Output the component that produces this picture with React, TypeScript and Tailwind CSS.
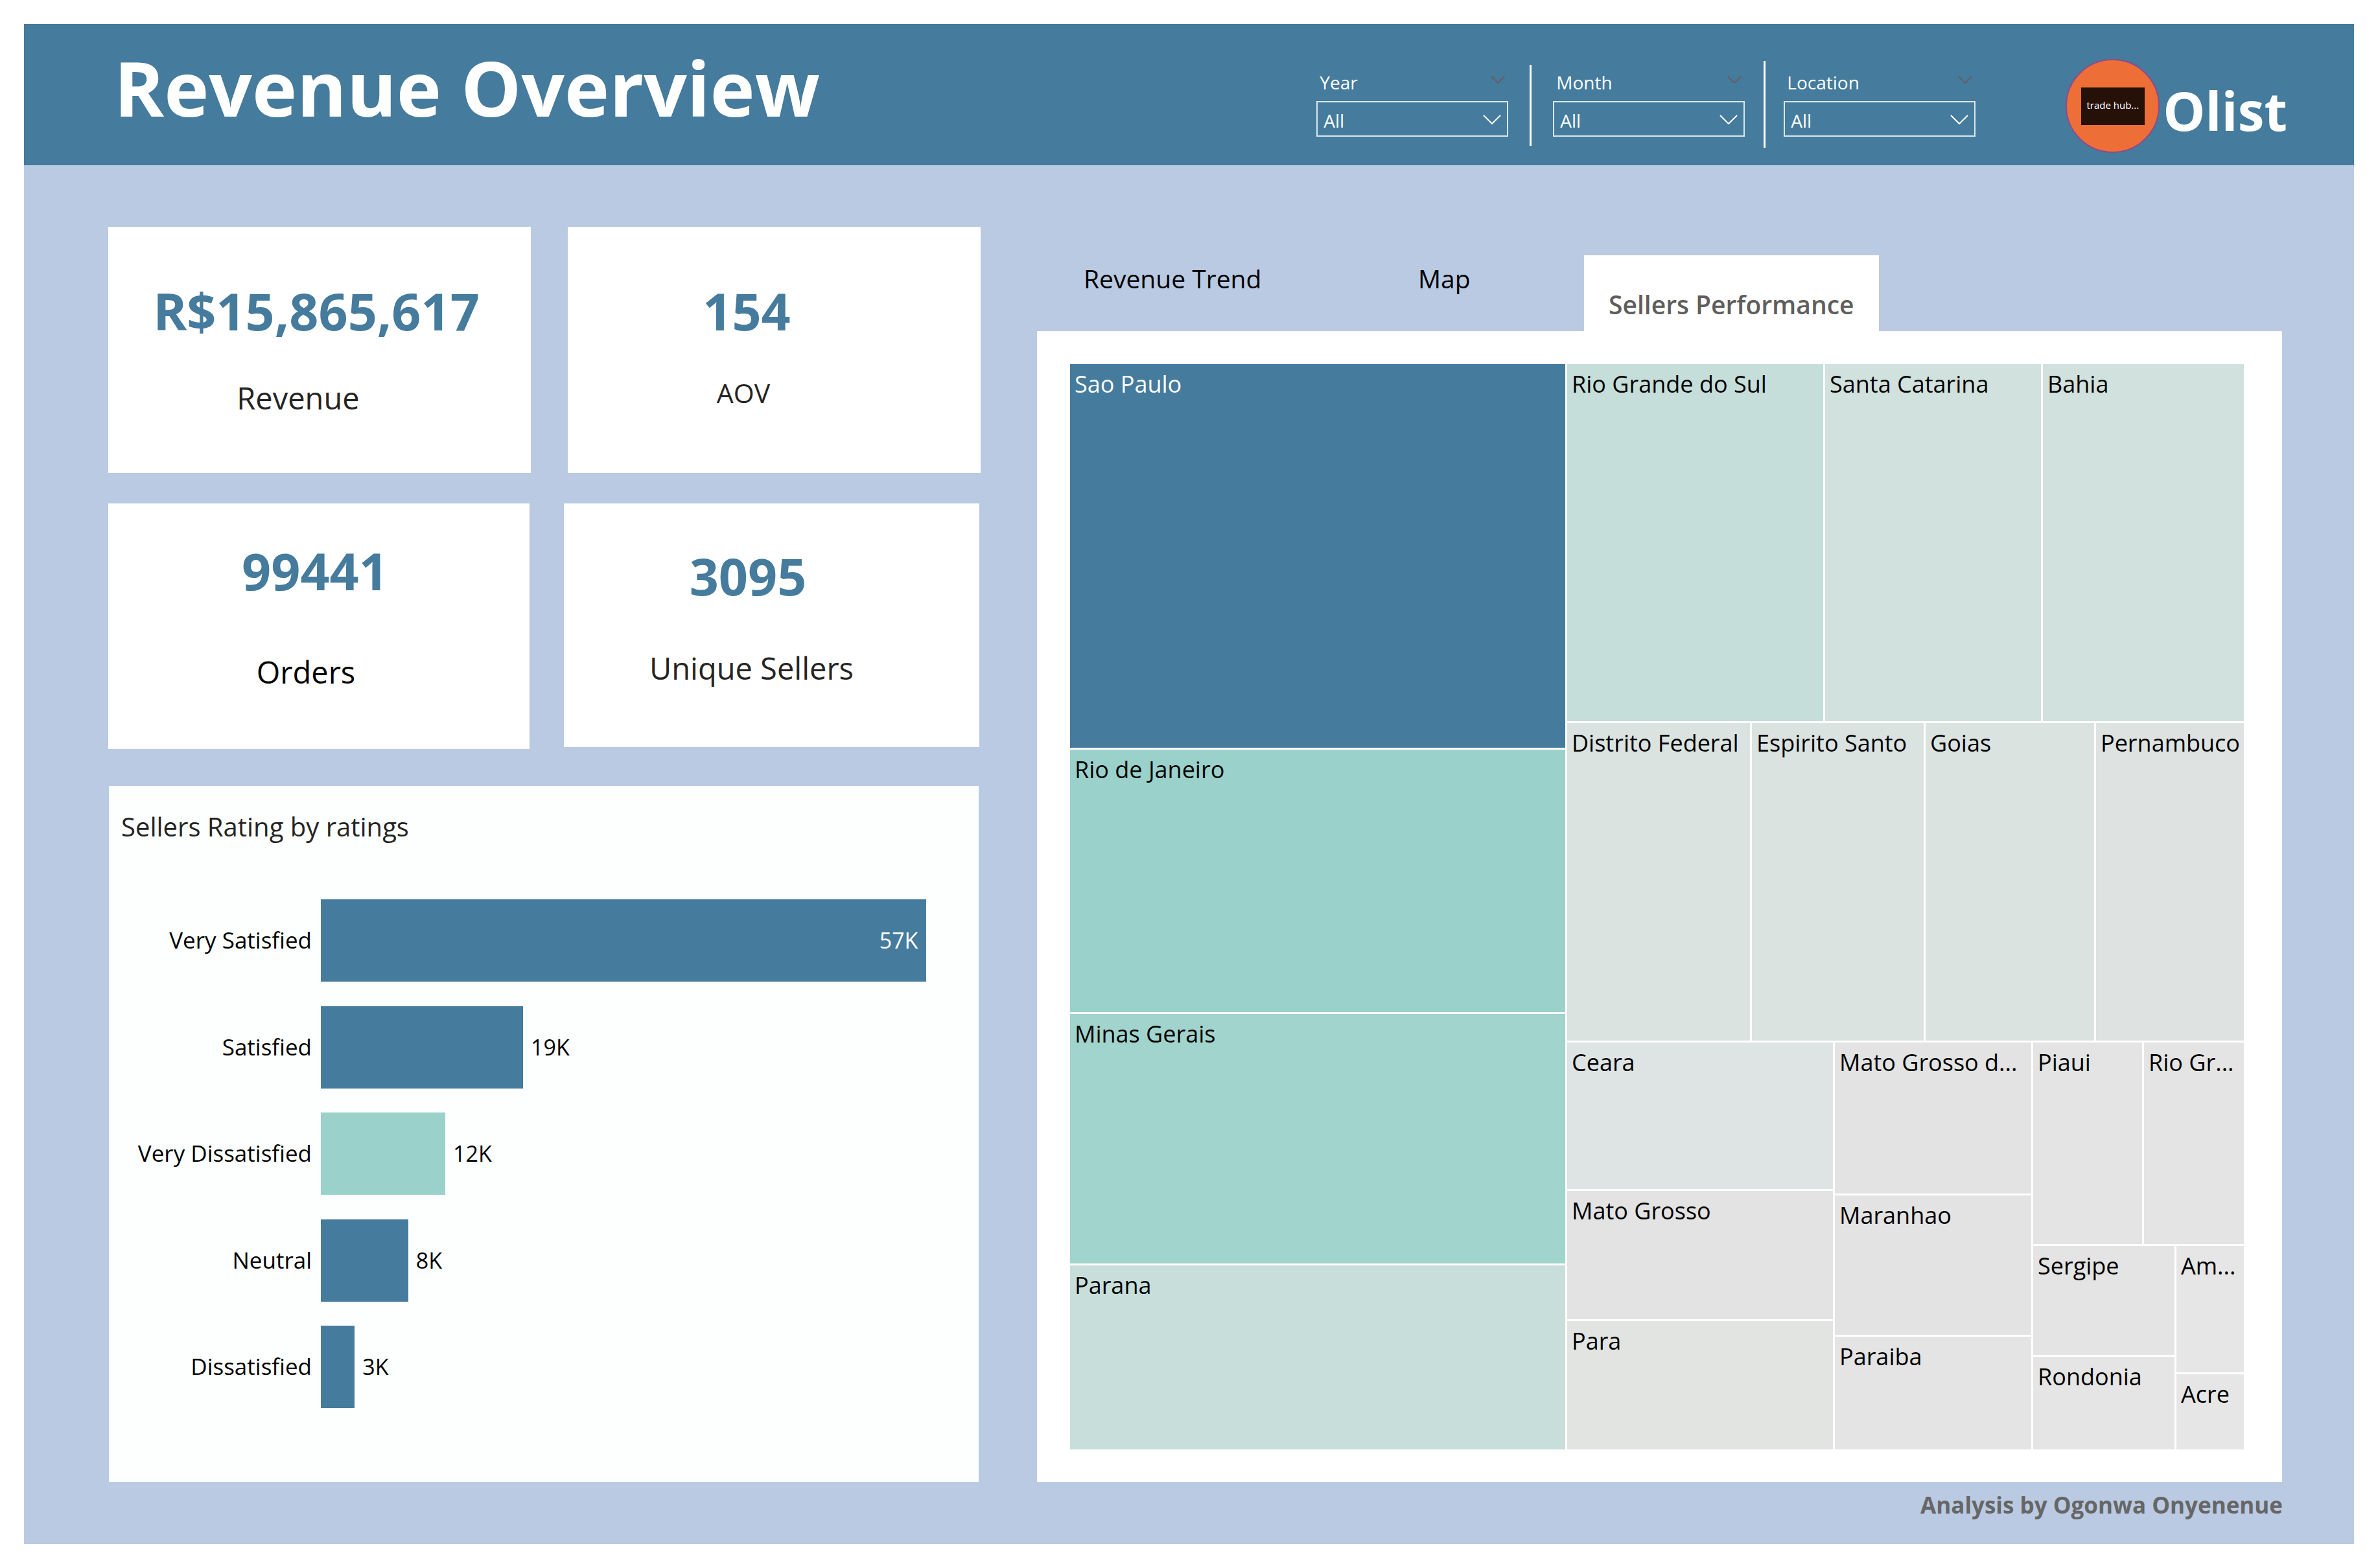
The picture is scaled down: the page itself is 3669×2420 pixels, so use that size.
import React from "react";

type Tile = { name: string; size: number; color: string; text?: string };
type Group = { dir: "row" | "col"; size: number; items: Node[] };
type Node = Tile | Group;

const row = (size: number, ...items: Node[]): Group => ({ dir: "row", size, items });
const col = (size: number, ...items: Node[]): Group => ({ dir: "col", size, items });
const tile = (name: string, size: number, color: string, text = "text-black"): Tile => ({ name, size, color, text });

const sellersByState = row(
  1811,
  col(
    764,
    tile("Sao Paulo", 592, "bg-[#457b9d]", "text-white"),
    tile("Rio de Janeiro", 405, "bg-[#9ad2cb]"),
    tile("Minas Gerais", 385, "bg-[#a1d4cc]"),
    tile("Parana", 284, "bg-[#c8deda]")
  ),
  col(
    1044,
    row(
      551,
      tile("Rio Grande do Sul", 395, "bg-[#c5deda]"),
      tile("Santa Catarina", 333, "bg-[#d1e1dd]"),
      tile("Bahia", 310, "bg-[#d1e1dd]")
    ),
    row(
      490,
      tile("Distrito Federal", 282, "bg-[#dbe3e1]"),
      tile("Espirito Santo", 265, "bg-[#dbe3e1]"),
      tile("Goias", 260, "bg-[#dbe3e1]"),
      tile("Pernambuco", 228, "bg-[#dee3e2]")
    ),
    row(
      628,
      col(
        410,
        tile("Ceara", 226, "bg-[#dee4e3]"),
        tile("Mato Grosso", 198, "bg-[#e2e3e2]"),
        tile("Para", 198, "bg-[#e2e4e2]")
      ),
      col(
        303,
        tile("Mato Grosso d...", 233, "bg-[#e2e3e2]"),
        tile("Maranhao", 216, "bg-[#e2e3e2]"),
        tile("Paraiba", 174, "bg-[#e3e4e3]")
      ),
      col(
        325,
        row(
          311,
          tile("Piaui", 168, "bg-[#e3e4e3]"),
          tile("Rio Gr...", 154, "bg-[#e3e4e3]")
        ),
        row(
          315,
          col(
            218,
            tile("Sergipe", 169, "bg-[#e3e4e3]"),
            tile("Rondonia", 143, "bg-[#e4e5e4]")
          ),
          col(
            104,
            tile("Am...", 196, "bg-[#e6e6e6]"),
            tile("Acre", 116, "bg-[#e6e6e6]")
          )
        )
      )
    )
  )
);

function TreeNode({ node }: { node: Node }) {
  const grow = { flexGrow: node.size };
  if ("items" in node) {
    return (
      <div
        style={grow}
        className={`flex min-h-0 min-w-0 basis-0 gap-[3px] ${node.dir === "row" ? "flex-row" : "flex-col"}`}
      >
        {node.items.map((n, i) => (
          <TreeNode key={i} node={n} />
        ))}
      </div>
    );
  }
  return (
    <div style={grow} className={`min-h-0 min-w-0 basis-0 overflow-hidden ${node.color}`}>
      <p className={`pt-[7px] pl-[7px] text-[36px] leading-[48px] whitespace-nowrap ${node.text}`}>{node.name}</p>
    </div>
  );
}

function Chevron({ className, stroke = 2 }: { className: string; stroke?: number }) {
  return (
    <svg
      viewBox="0 0 28 15"
      fill="none"
      stroke="currentColor"
      strokeWidth={stroke}
      className={className}
      aria-hidden="true"
    >
      <path d="M1 1 14 14 27 1" />
    </svg>
  );
}

function Filter({ id, label }: { id: string; label: string }) {
  return (
    <div className="mt-[72px] w-[296px]">
      <div className="flex items-start justify-between pr-[5px] pl-[5px]">
        <label htmlFor={id} className="text-[28px] leading-[36px]">
          {label}
        </label>
        <Chevron className="mt-2 h-3 w-[22px] text-[#606366]" stroke={3} />
      </div>
      <div className="relative mt-[11px]">
        <select
          id={id}
          className="block h-[55px] w-full appearance-none border-2 border-[#dbe7ee] bg-transparent pt-1 pl-[9px] text-[28px] leading-[36px]"
        >
          <option>All</option>
        </select>
        <Chevron className="pointer-events-none absolute top-[21px] right-[11px] h-[15px] w-7" />
      </div>
    </div>
  );
}

type KpiProps = {
  value: string;
  label: string;
  card: string;
  valueClass: string;
  labelClass: string;
};

function Kpi({ value, label, card, valueClass, labelClass }: KpiProps) {
  return (
    <section className={`bg-white text-center ${card}`}>
      <p className={`text-[79px] leading-[80px] font-bold text-[#457b9d] ${valueClass}`}>{value}</p>
      <h2 className={`leading-[60px] ${labelClass}`}>{label}</h2>
    </section>
  );
}

const ratings = [
  { label: "Very Satisfied", count: 57328, text: "57K", color: "bg-[#457b9d]", inside: true },
  { label: "Satisfied", count: 19142, text: "19K", color: "bg-[#457b9d]" },
  { label: "Very Dissatisfied", count: 11780, text: "12K", color: "bg-[#9ad2cb]" },
  { label: "Neutral", count: 8270, text: "8K", color: "bg-[#457b9d]" },
  { label: "Dissatisfied", count: 3210, text: "3K", color: "bg-[#457b9d]" },
];
const AXIS_MAX = 62272;

export default function App() {
  return (
    <div className="bg-white p-[37px] font-['Open_Sans','Noto_Sans',sans-serif] text-black">
      <div className="bg-[#bacae2]">
        <header className="flex h-[218px] items-start bg-[#457b9d] pr-[103px] pl-[139px] text-white">
          <h1 className="flex-1 pt-8 text-[117px] leading-[131px] font-bold whitespace-nowrap">Revenue Overview</h1>
          <Filter id="year" label="Year" />
          <div className="mx-[33px] mt-[63px] h-[125px] w-[3px] bg-white" />
          <Filter id="month" label="Month" />
          <div className="mt-[57px] mr-7 ml-[29px] h-[134px] w-[3px] bg-white" />
          <Filter id="location" label="Location" />
          <div className="mt-[54px] ml-[139px] flex size-[145px] items-center justify-center rounded-full border-2 border-[#8f4a8c] bg-[#ed6f37]">
            <div className="flex h-[58px] w-[98px] items-center justify-center bg-[#261109] pb-1 text-[15px] leading-5">
              trade hub...
            </div>
          </div>
          <p className="mt-[83px] ml-[5px] text-[82px] leading-[100px] font-bold">Olist</p>
        </header>

        <main className="grid grid-cols-[1346fr_1921fr] gap-x-[87px] pr-[111px] pl-[130px]">
          <div className="pt-[95px]">
            <div className="flex justify-between">
              <Kpi
                value="R$15,865,617"
                label="Revenue"
                card="w-[652px] min-h-[380px] pt-[90px]"
                valueClass="pr-[10px]"
                labelClass="pt-[64px] pr-[66px] text-[47px] text-[#252423]"
              />
              <Kpi
                value="154"
                label="AOV"
                card="w-[637px] min-h-[380px] pt-[90px]"
                valueClass="pr-[85px]"
                labelClass="pt-[56px] pr-[95px] text-[41px] text-[#252423]"
              />
            </div>
            <div className="mt-[47px] flex items-start justify-between pr-[2px]">
              <Kpi
                value="99441"
                label="Orders"
                card="w-[650px] min-h-[379px] pt-[64px]"
                valueClass="pr-[12px]"
                labelClass="pt-[86px] pr-[40px] text-[47px]"
              />
              <Kpi
                value="3095"
                label="Unique Sellers"
                card="w-[641px] min-h-[376px] pt-[72px]"
                valueClass="pr-[73px]"
                labelClass="pt-[72px] pr-[62px] text-[47px] text-[#252423]"
              />
            </div>
            <section className="mt-[57px] mr-[3px] ml-px flex min-h-[1074px] flex-col bg-[#fcfffd] pt-9 pb-[114px]">
              <h2 className="pl-[19px] text-[40px] leading-[54px] text-[#252423]">Sellers Rating by ratings</h2>
              <ul className="mt-[85px] flex flex-1 flex-col justify-between">
                {ratings.map((r) => (
                  <li key={r.label} className="flex h-[127px] items-center gap-[14px]">
                    <span className="w-[313px] text-right text-[35px]">{r.label}</span>
                    <div className="flex h-full flex-1 items-center">
                      <div
                        style={{ width: `${(r.count / AXIS_MAX) * 100}%` }}
                        className={`flex h-full shrink-0 items-center justify-end pr-[13px] text-[34px] text-white ${r.color}`}
                      >
                        {r.inside ? r.text : null}
                      </div>
                      {r.inside ? null : <span className="pl-3 text-[34px]">{r.text}</span>}
                    </div>
                  </li>
                ))}
              </ul>
            </section>
          </div>

          <div className="flex flex-col pt-[139px]">
            <div role="tablist" className="flex items-start pl-[72px] text-[39px] leading-[54px]">
              <button role="tab" aria-selected="false" className="w-[516px] pt-[9px] text-left">
                Revenue Trend
              </button>
              <button role="tab" aria-selected="false" className="w-[256px] pt-[9px] text-left">
                Map
              </button>
              <button
                role="tab"
                aria-selected="true"
                className="bg-white px-[38px] pt-[49px] pb-[14px] font-semibold text-[#605e5c]"
              >
                Sellers Performance
              </button>
            </div>
            <section className="flex flex-1 bg-white pt-[51px] pr-[59px] pb-[50px] pl-[51px]">
              <TreeNode node={sellersByState} />
            </section>
          </div>
        </main>

        <footer className="pt-[12px] pr-[110px] pb-[36px] text-right text-[35px] leading-[48px] font-bold text-[#666666]">
          Analysis by Ogonwa Onyenenue
        </footer>
      </div>
    </div>
  );
}
